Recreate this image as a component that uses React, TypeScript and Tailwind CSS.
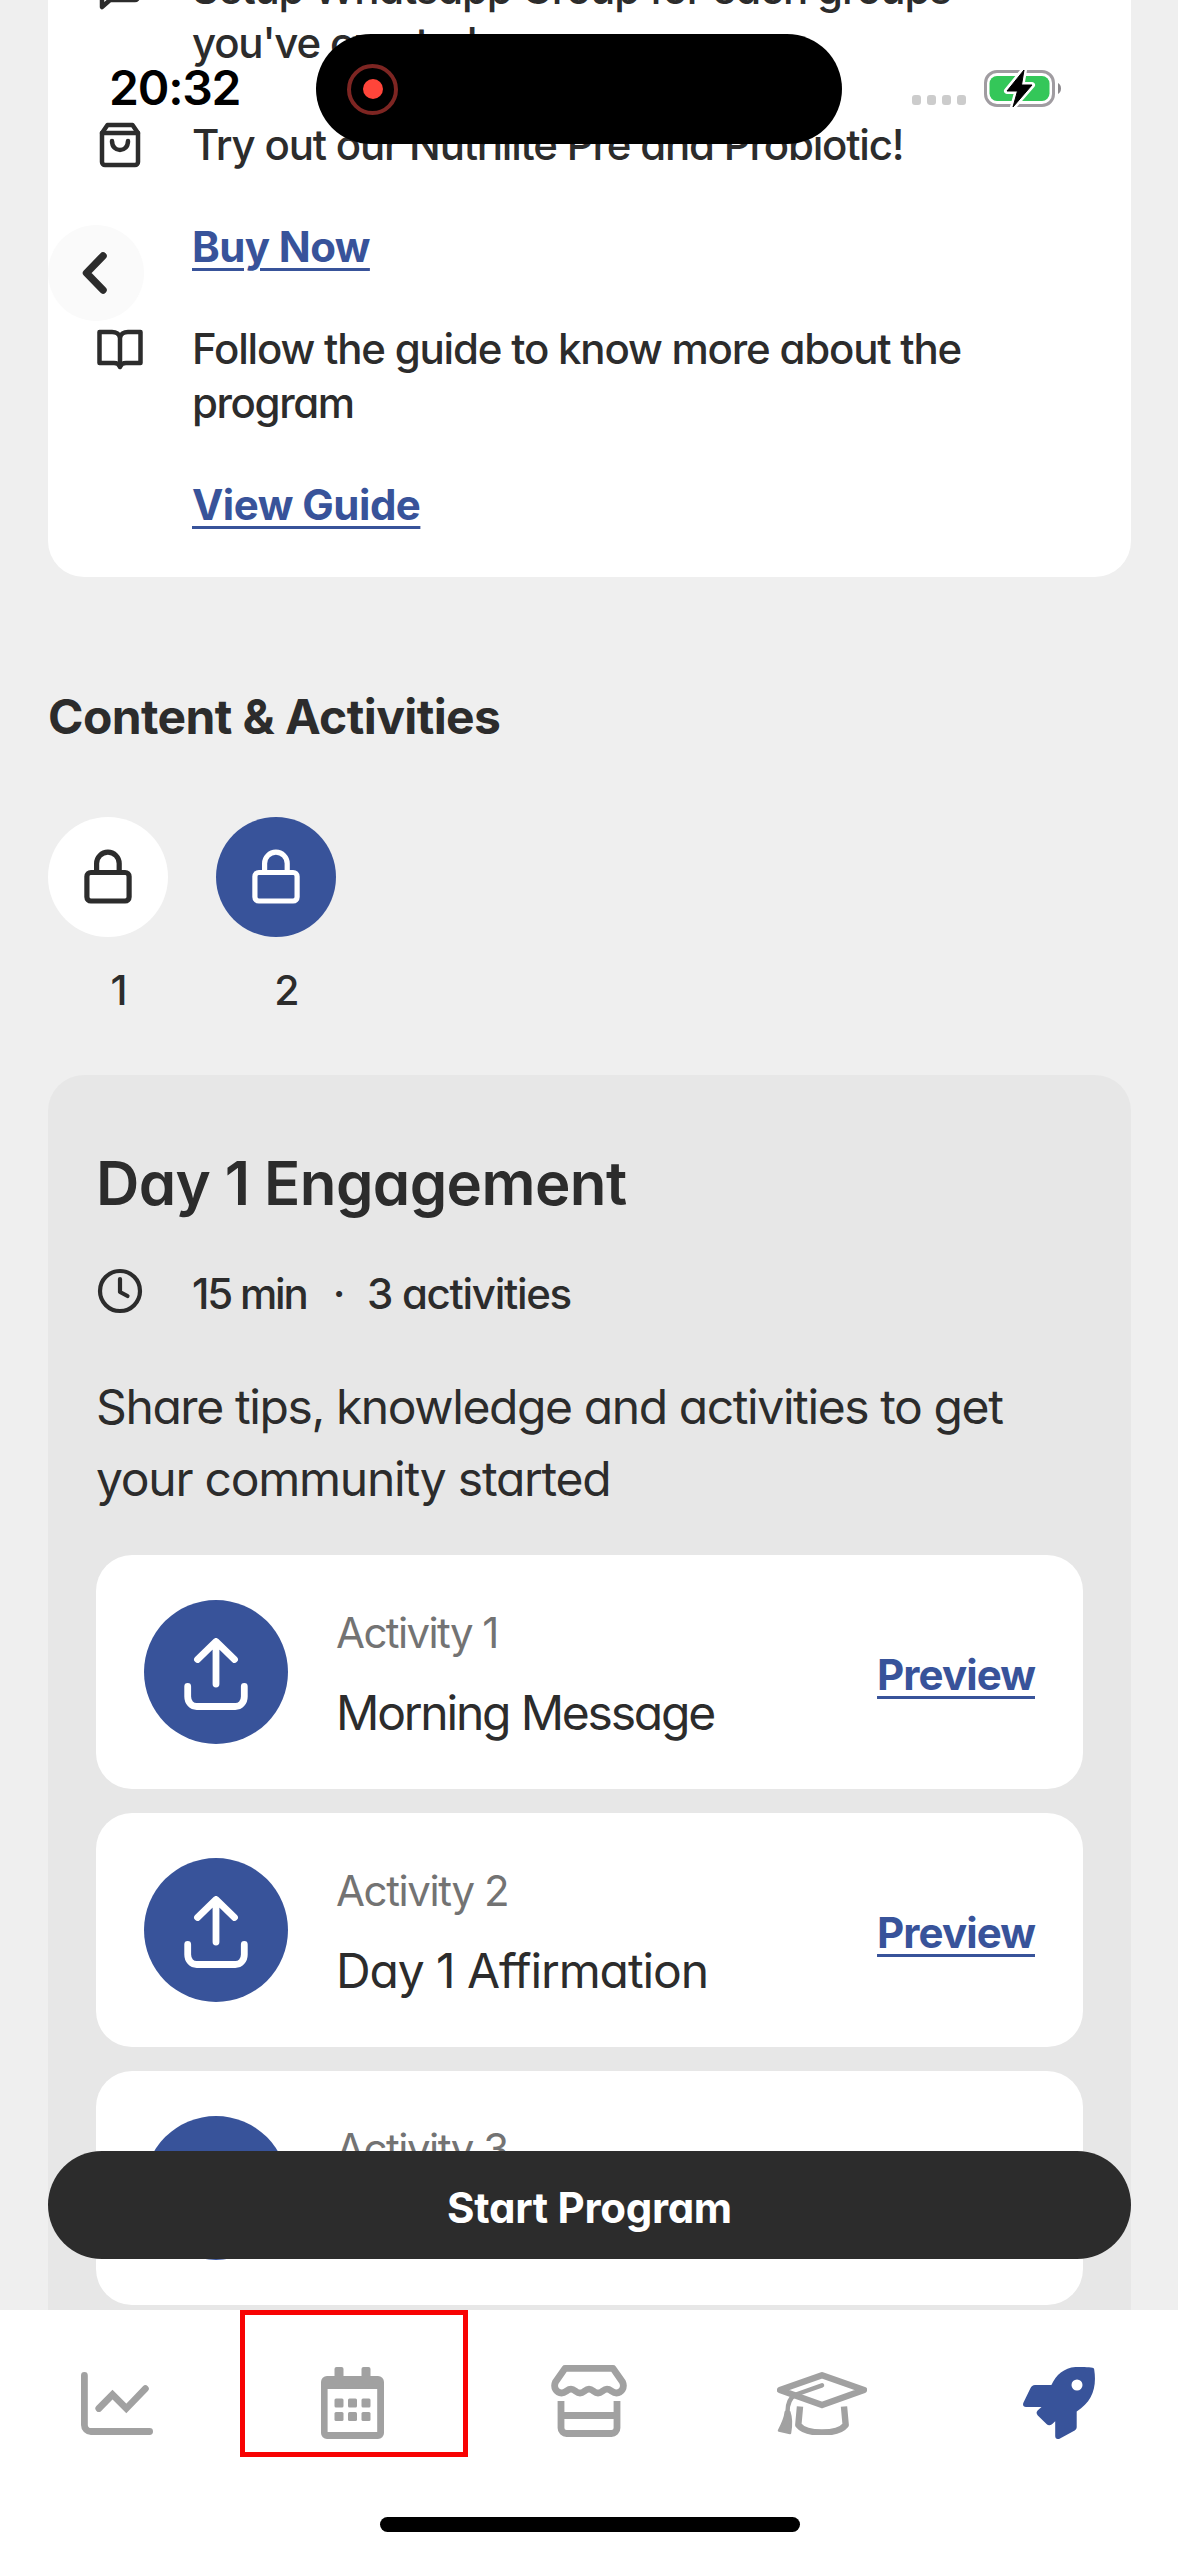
import React from "react";

const BLUE = "#38539a";

function Chat() {
  return (
    <svg viewBox="0 0 48 48" className="size-12" fill="none" stroke="currentColor" strokeWidth="4.5" strokeLinejoin="round">
      <path d="M6 42V8a3 3 0 0 1 3-3h30a3 3 0 0 1 3 3v24a3 3 0 0 1-3 3H14z" />
    </svg>
  );
}

function Bag() {
  return (
    <svg viewBox="0 0 48 48" className="size-12" fill="none" stroke="currentColor" strokeWidth="4.5" strokeLinecap="round" strokeLinejoin="round">
      <path d="M6 12v29a3 3 0 0 0 3 3h30a3 3 0 0 0 3-3V12l-5.500-8H11.500z" />
      <path d="M6 12h36M16 20c0 12 16 12 16 0" />
    </svg>
  );
}

function Book() {
  return (
    <svg viewBox="0 0 48 48" className="size-12" fill="none" stroke="currentColor" strokeWidth="4.5" strokeLinecap="round" strokeLinejoin="round">
      <path d="M24 12c-1-3-4-5-8-5H3.500v31H18c3 0 5 1 6 4 1-3 3-4 6-4h14.500V7H32c-4 0-7 2-8 5z" />
      <path d="M24 12v29" />
    </svg>
  );
}

function Lock() {
  return (
    <svg viewBox="0 0 48 56" className="h-[56px] w-[48px]" fill="none" stroke="currentColor" strokeWidth="5.2">
      <rect x="2.900" y="23.500" width="42.200" height="28.500" rx="4" />
      <path d="M12.600 23V14.500a11.300 11.300 0 0 1 22.600 0V23" />
    </svg>
  );
}

function Upload() {
  return (
    <svg viewBox="0 0 64 72" className="mt-1 h-[72px] w-[64px]" fill="none" stroke="white" strokeWidth="6.8" strokeLinecap="round" strokeLinejoin="round">
      <path d="M32 46V4M13.500 21.500 32 3.500l18.500 18M3.700 48.500v10c0 6 4 10 9 10h38.600c5 0 9-4 9-10v-10" />
    </svg>
  );
}

function Clock() {
  return (
    <svg viewBox="0 0 48 48" className="size-12" fill="none" stroke="currentColor" strokeWidth="4.2" strokeLinecap="round" strokeLinejoin="round">
      <circle cx="24" cy="24" r="20" />
      <path d="M24 12v13l7.500 4" />
    </svg>
  );
}

function StatusBar() {
  return (
    <div className="absolute inset-x-0 top-[34px] flex h-[110px] items-center">
      <span className="-mt-[3px] w-[316px] pl-[109px] text-[48px] leading-none font-semibold tracking-[-1.2px] text-black">20:32</span>
      <div className="flex h-[110px] w-[526px] items-center rounded-full bg-black pl-[31px]">
        <div className="flex size-[51px] items-center justify-center rounded-full border-4 border-[#7d2522]">
          <div className="size-5 rounded-full bg-[#ff453a]" />
        </div>
      </div>
      <div className="ml-[70px] flex gap-[6px] pt-[22px]">
        {[0, 1, 2, 3].map((i) => (
          <span key={i} className="h-[10px] w-[9px] rounded-[3px] bg-[#cccccc]" />
        ))}
      </div>
      <svg viewBox="0 0 80 42" className="ml-[16px] -mt-[3px] h-[42px] w-[80px]">
        <rect x="3.500" y="4.500" width="68" height="34" rx="11.500" fill="none" stroke="#a09ca1" strokeWidth="3" />
        <path d="M76 16c4 2 4 9 0 11z" fill="#8b888c" />
        <rect x="7.500" y="9" width="60" height="25" rx="7.500" fill="#34c759" />
        <path d="M42 3 25 24h10.500L31 40 50 18H39.500z" fill="black" stroke="white" strokeWidth="6" strokeLinejoin="round" />
        <path d="M42 3 25 24h10.500L31 40 50 18H39.500z" fill="black" stroke="black" strokeWidth="1" strokeLinejoin="round" />
      </svg>
    </div>
  );
}

function Step({ icon, children, link }: { icon: React.ReactNode; children: React.ReactNode; link?: React.ReactNode }) {
  return (
    <div className="flex gap-12">
      <div className="pt-1">{icon}</div>
      <div className="-mb-px flex flex-col items-start gap-12 pt-px text-[42px] leading-[54px] font-medium">
        <p>{children}</p>
        {link}
      </div>
    </div>
  );
}

function Link({ children, className }: { children: React.ReactNode; className: string }) {
  return (
    <a className={`text-[42px] leading-[54px] font-bold text-[#38539a] underline decoration-3 underline-offset-[6px] ${className}`}>
      {children}
    </a>
  );
}

function Activity({ label, title, labelClass, titleClass }: { label: string; title: string; labelClass: string; titleClass: string }) {
  return (
    <div className="flex h-[234px] items-center rounded-[36px] bg-white px-12">
      <div className="flex size-36 items-center justify-center rounded-full bg-[#38539a]">
        <Upload />
      </div>
      <div className="ml-12 flex-1 pt-[11px] whitespace-nowrap">
        <p className={`text-[42px] leading-[54px] text-[#737373] ${labelClass}`}>{label}</p>
        <p className={`mt-[17px] text-[48px] leading-[72px] ${titleClass}`}>{title}</p>
      </div>
      <Link className="mt-[5px] tracking-[-0.9px]">Preview</Link>
    </div>
  );
}

function Nav() {
  return (
    <nav className="relative h-[246px] shrink-0 bg-white text-[#a1a1a1]">
      <div className="flex h-[186px] items-center pl-[81px]">
        <svg viewBox="0 0 72 63" className="h-[63px] w-[72px]" fill="none" stroke="currentColor" strokeWidth="6.8" strokeLinecap="round">
          <path d="M3.400 3.400V53a6.500 6.500 0 0 0 6.500 6.500H68.600M17.800 36.500 31.500 22.500 45.300 36.500 64.400 16.700" />
        </svg>
        <svg viewBox="0 0 63 72" className="ml-[168px] h-[72px] w-[63px]" fill="currentColor">
          <rect x="13.500" width="9" height="14" rx="2" />
          <rect x="40.500" width="9" height="14" rx="2" />
          <path fillRule="evenodd" d="M6 9h51a6 6 0 0 1 6 6v51a6 6 0 0 1-6 6H6a6 6 0 0 1-6-6V15a6 6 0 0 1 6-6zM6.600 22v43h49.600V22z" />
          {[13.5, 27, 40.5].map((x) => (
            <g key={x}>
              <rect x={x} y="31.500" width="9" height="9" rx="1.500" />
              <rect x={x} y="45" width="9" height="9" rx="1.500" />
            </g>
          ))}
        </svg>
        <svg viewBox="0 0 76 72" className="-mt-1 ml-[167px] h-[72px] w-[76px]" fill="none" stroke="currentColor" strokeWidth="6.800">
          <path strokeLinejoin="round" d="M14 3.400h48L71.500 17c2.500 5.500-1 11-6 11-4.500 0-5.500-3.800-9.500-3.800s-5 3.800-9 3.800-5-3.800-9-3.800-5 3.800-9 3.800-5-3.800-9-3.800-5 3.800-9.500 3.800c-5 0-8.500-5.500-6-11z" />
          <path d="M10 36v27a5.500 5.500 0 0 0 5.500 5.500h45A5.500 5.500 0 0 0 66 63V36M10 50.500h56" />
        </svg>
        <svg viewBox="0 0 90 63" className="ml-[150px] h-[63px] w-[90px]" fill="none" stroke="currentColor" strokeWidth="6.400" strokeLinejoin="round">
          <path d="M45 3.300 87 18 45 33 3 18z" />
          <path d="M45 13.300 19 22.500C12 26 10.500 32 10.500 40" strokeWidth="4.500" strokeLinecap="round" />
          <path d="M8.800 40h3.500c2 6 2 14 .7 21L2 58.500C5 53 8 47 8.800 40z" fill="currentColor" strokeWidth="2.500" />
          <path d="M23 34.500 21.300 53c8 10 39.400 10 47.400 0L67 34.500" />
        </svg>
        <svg viewBox="0 0 72 72" className="ml-[156px] h-[72px] w-[72px]" fill={BLUE}>
          <path fillRule="evenodd" d="M52.500 0C60-.4 66 .3 69.500.8c1 .1 1.500.7 1.700 1.700 2.800 18-2 32-17.500 42V60c0 1.500-.7 2.700-2 3.500L37 71.400c-2.500 1.400-4.800.3-4.800-2.400V54.300l-3.200 3c-1.900 1.400-3.900 1.400-5.500-.3l-8.700-8.500c-1.600-1.700-1.600-3.500-.2-5.100l3.900-3.400H3c-2.700 0-3.600-2-2.500-4.500l6.800-14C8.300 19.300 9.800 18 12 18h16.400C33 8 41 .8 52.500 0zM54 12.500a5.500 5.500 0 1 0 .01 11 5.500 5.500 0 0 0-.01-11z" />
        </svg>
      </div>
      <div className="absolute top-0 left-[240px] h-[147px] w-[228px] border-[5px] border-[#f80303]" />
      <div className="absolute top-[207px] left-[380px] h-[15px] w-[420px] rounded-full bg-black" />
    </nav>
  );
}

export default function App() {
  return (
    <div className="relative flex h-[2556px] w-[1178px] flex-col overflow-hidden bg-[#efefef] font-[Inter,sans-serif] text-[#2c2c2c] [font-feature-settings:'cv11']">
      <main className="min-h-0 flex-1 overflow-hidden pr-[47px] pl-12">
        <section className="-mt-[39px] flex h-[616px] flex-col gap-12 rounded-b-[36px] bg-white px-12">
          <Step icon={<Chat />}>
            <span className="tracking-[-1.2px]">Setup Whatsapp Group for each groups</span>
            <br />
            <span className="tracking-[-1.2px]">you've created</span>
          </Step>
          <Step icon={<Bag />} link={<Link className="tracking-[-0.6px]">Buy Now</Link>}>
            <span className="tracking-[-1.2px]">Try out our Nutrilite Pre and Probiotic!</span>
          </Step>
          <Step icon={<Book />} link={<Link className="tracking-[-0.5px]">View Guide</Link>}>
            <span className="tracking-[-1.2px]">Follow the guide to know more about the</span>
            <br />
            <span className="tracking-[-1.4px]">program</span>
          </Step>
        </section>

        <h2 className="mt-[108px] text-[48px] leading-[64px] font-bold tracking-[-0.6px]">Content &amp; Activities</h2>

        <div className="mt-[68px] flex gap-12">
          <div className="w-[120px]">
            <div className="flex size-[120px] items-center justify-center rounded-full bg-white">
              <Lock />
            </div>
            <p className="mt-[26px] pl-[22px] text-center text-[41px] leading-[54px] font-medium">1</p>
          </div>
          <div className="w-[120px]">
            <div className="flex size-[120px] items-center justify-center rounded-full bg-[#38539a] text-white">
              <Lock />
            </div>
            <p className="mt-[26px] pl-[22px] text-center text-[41px] leading-[54px] font-medium">2</p>
          </div>
        </div>

        <section className="mt-[58px] h-[1400px] rounded-[36px] bg-[#e7e7e7] px-12 pt-[72px]">
          <h3 className="text-[60px] leading-[72px] font-[560] tracking-[-0.6px]">Day 1 Engagement</h3>
          <div className="mt-12 flex h-12 items-center gap-12">
            <Clock />
            <p className="flex pt-[6px] text-[42px] leading-[54px] font-medium">
              <span className="w-[126px] tracking-[-2.2px] whitespace-nowrap">15 min</span>
              <span className="w-[42px] text-center">·</span>
              <span className="ml-[7px] tracking-[-1.3px]">3 activities</span>
            </p>
          </div>
          <p className="mt-[56px] text-[48px] leading-[72px]">
            <span className="tracking-[-1.4px]">Share tips, knowledge and activities to get</span>
            <br />
            <span className="tracking-[-1.25px]">your community started</span>
          </p>
          <div className="mt-10 flex flex-col gap-6">
            <Activity label="Activity 1" title="Morning Message" labelClass="tracking-[-1.6px]" titleClass="tracking-[-2.2px]" />
            <Activity label="Activity 2" title="Day 1 Affirmation" labelClass="tracking-[-1.4px]" titleClass="tracking-[-1.1px]" />
            <Activity label="Activity 3" title="Day 1 Reflection" labelClass="tracking-[-1.5px]" titleClass="tracking-[-1.1px]" />
          </div>
        </section>
      </main>
      <Nav />

      <button className="absolute top-[225px] left-12 flex size-24 items-center justify-center rounded-full bg-[#fafafa]">
        <svg viewBox="0 0 96 96" className="size-24" fill="none" stroke="#2c2c2c" strokeWidth="7.500" strokeLinecap="round" strokeLinejoin="round">
          <path d="M55 31 38.500 48 55 65" />
        </svg>
      </button>
      <StatusBar />
      <button className="absolute top-[2151px] left-12 h-[108px] w-[1083px] rounded-full bg-[#2c2c2c] pt-1 text-[42px] font-bold tracking-[-0.3px] text-white">
        Start Program
      </button>
    </div>
  );
}
